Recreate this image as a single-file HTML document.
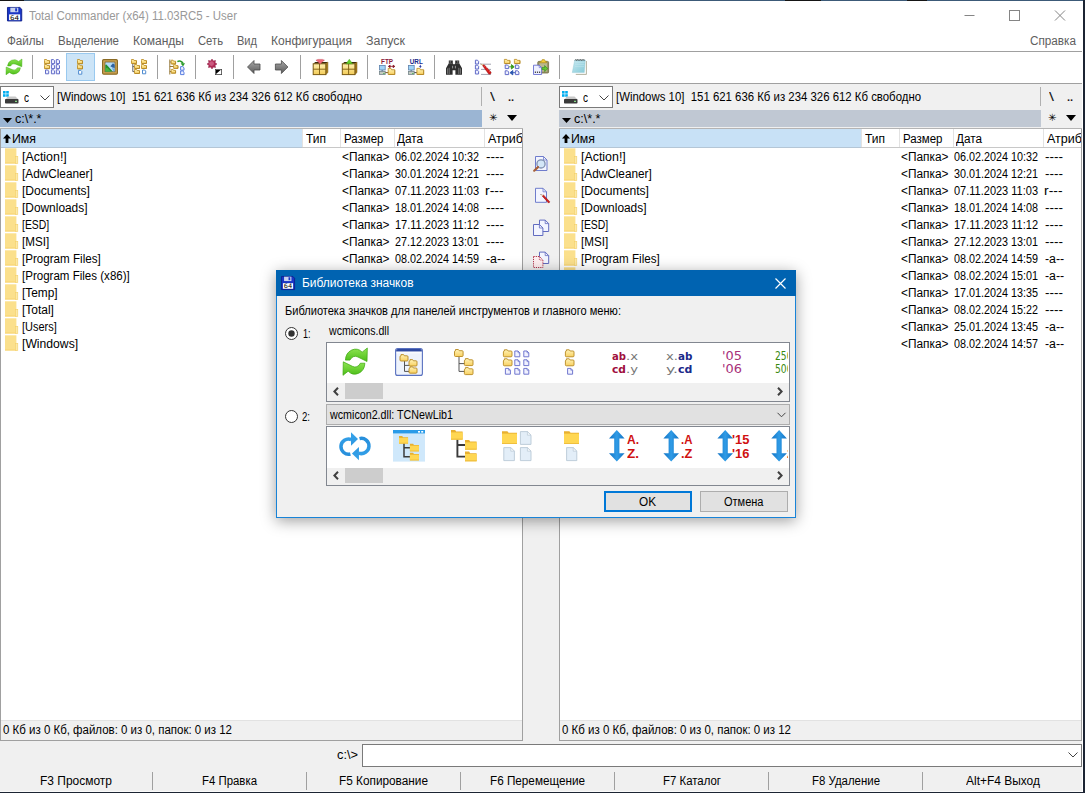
<!DOCTYPE html>
<html lang="ru"><head><meta charset="utf-8"><title>Total Commander</title>
<style>
html,body{margin:0;padding:0;}
body{width:1085px;height:793px;position:relative;overflow:hidden;background:#f0f0f0;font-family:"Liberation Sans", sans-serif;font-size:12px;color:#000;}
.a{position:absolute;}
.t{position:absolute;white-space:pre;transform-origin:0 0;line-height:1;}
svg{position:absolute;overflow:visible;}
</style></head><body>
<svg width="0" height="0" style="position:absolute"><defs><linearGradient id="gGreen" x1="0" y1="0" x2="0" y2="1"><stop offset="0" stop-color="#8ee552"/><stop offset="1" stop-color="#4cbd18"/></linearGradient><linearGradient id="gGreen2" x1="0" y1="1" x2="0" y2="0"><stop offset="0" stop-color="#8ee552"/><stop offset="1" stop-color="#4cbd18"/></linearGradient><linearGradient id="gBlue2" gradientUnits="userSpaceOnUse" x1="0" y1="0" x2="0" y2="28"><stop offset="0" stop-color="#36a3ea"/><stop offset="1" stop-color="#238ad8"/></linearGradient><linearGradient id="gFold" x1="0" y1="0" x2="0" y2="1"><stop offset="0" stop-color="#fff3b8"/><stop offset="1" stop-color="#f8d060"/></linearGradient><linearGradient id="gGray" x1="0" y1="0" x2="0" y2="1"><stop offset="0" stop-color="#a8a8a8"/><stop offset="1" stop-color="#5a5a5a"/></linearGradient><linearGradient id="gBlueArr" x1="0" y1="0" x2="1" y2="0"><stop offset="0" stop-color="#1273c4"/><stop offset="0.5" stop-color="#2f9be6"/><stop offset="1" stop-color="#1273c4"/></linearGradient><linearGradient id="gBox" x1="0" y1="0" x2="0" y2="1"><stop offset="0" stop-color="#fff0b0"/><stop offset="1" stop-color="#f3cc58"/></linearGradient><linearGradient id="gNote" x1="0" y1="0" x2="1" y2="1"><stop offset="0" stop-color="#c4e8f0"/><stop offset="1" stop-color="#86cad8"/></linearGradient><linearGradient id="gSky" x1="0" y1="0" x2="0" y2="1"><stop offset="0" stop-color="#9fd4f5"/><stop offset="1" stop-color="#e9f6ff"/></linearGradient></defs></svg>
<div class="a" style="left:0px;top:0px;width:1085px;height:793px;background:#f0f0f0;"></div>
<div class="a" style="left:0px;top:0px;width:1085px;height:52px;background:#ffffff;"></div>
<div class="a" style="left:0px;top:0px;width:1085px;height:1px;background:#3c5a78;"></div>
<div class="a" style="left:0px;top:0px;width:24px;height:1px;background:#151515;"></div>
<div class="a" style="left:785px;top:0px;width:36px;height:1px;background:#151515;"></div>
<div class="a" style="left:907px;top:0px;width:20px;height:1px;background:#151515;"></div>
<svg style="left:7px;top:7px" width="16" height="16" viewBox="0 0 16 16"><g transform="scale(0.95 0.9)"><g transform="scale(1.0)"><path d="M0.5 0.5H13.5L15.5 2.5V15.5H0.5Z" fill="#1a36c6" stroke="#0e1f8c" stroke-width="1"/><rect x="3.5" y="0.8" width="8.4" height="5" fill="#c9d3ee"/><rect x="8.6" y="1.4" width="2" height="3.4" fill="#1a36c6"/><rect x="2.2" y="8.2" width="11.6" height="6.4" fill="#fff"/><text x="3.2" y="13.9" font-family="DejaVu Sans Mono, Liberation Mono, monospace" font-size="7" fill="#000" textLength="9.6" lengthAdjust="spacingAndGlyphs">64</text></g></g></svg>
<span class="t" style="left:29px;top:9.84px;font-size:12px;color:#999;transform:scaleX(0.9547);">Total Commander (x64) 11.03RC5 - User</span>
<svg style="left:947px;top:1px" width="138" height="29" viewBox="0 0 138 29"><path d="M17.5 14.5h10" stroke="#858585" stroke-width="1" fill="none"/><rect x="62.5" y="9.5" width="10" height="10" stroke="#858585" stroke-width="1" fill="none"/><path d="M108 9.5l10 10M118 9.5l-10 10" stroke="#858585" stroke-width="1" fill="none"/></svg>
<span class="t" style="left:7px;top:34.84px;font-size:12px;color:#606060;transform:scaleX(0.9701);">Файлы</span>
<span class="t" style="left:58px;top:34.84px;font-size:12px;color:#606060;transform:scaleX(0.9592);">Выделение</span>
<span class="t" style="left:133px;top:34.84px;font-size:12px;color:#606060;transform:scaleX(1.0031);">Команды</span>
<span class="t" style="left:198px;top:34.84px;font-size:12px;color:#606060;transform:scaleX(0.9362);">Сеть</span>
<span class="t" style="left:237px;top:34.84px;font-size:12px;color:#606060;transform:scaleX(0.9209);">Вид</span>
<span class="t" style="left:271px;top:34.84px;font-size:12px;color:#606060;transform:scaleX(1.0058);">Конфигурация</span>
<span class="t" style="left:366px;top:34.84px;font-size:12px;color:#606060;transform:scaleX(1.0387);">Запуск</span>
<span class="t" style="left:1030px;top:34.84px;font-size:12px;color:#606060;transform:scaleX(0.9771);">Справка</span>
<div class="a" style="left:0px;top:52px;width:1085px;height:32px;background:#ffffff;"></div>
<div class="a" style="left:0px;top:51px;width:1085px;height:1px;background:#a0a0a0;"></div>
<div class="a" style="left:0px;top:83px;width:1085px;height:1px;background:#a0a0a0;"></div>
<div class="a" style="left:66px;top:53px;width:29px;height:28px;background:#cce4f7;border:1px solid #99c9ef;box-sizing:border-box;"></div>
<div class="a" style="left:32px;top:55px;width:1px;height:24px;background:#a0a0a0;"></div>
<div class="a" style="left:157px;top:55px;width:1px;height:24px;background:#a0a0a0;"></div>
<div class="a" style="left:195px;top:55px;width:1px;height:24px;background:#a0a0a0;"></div>
<div class="a" style="left:233px;top:55px;width:1px;height:24px;background:#a0a0a0;"></div>
<div class="a" style="left:300px;top:55px;width:1px;height:24px;background:#a0a0a0;"></div>
<div class="a" style="left:367px;top:55px;width:1px;height:24px;background:#a0a0a0;"></div>
<div class="a" style="left:434px;top:55px;width:1px;height:24px;background:#a0a0a0;"></div>
<div class="a" style="left:559px;top:55px;width:1px;height:24px;background:#a0a0a0;"></div>
<svg style="left:0;top:0" width="1085" height="90" viewBox="0 0 1085 90"><g transform="translate(6 59)"><path d="M1.6 7A6.6 6.6 0 0 1 12.6 2.4L16 0L15.8 7.8L9.8 5.2A3.9 3.9 0 0 0 4.6 7Z" fill="url(#gGreen)" stroke="#3fa812" stroke-width="0.45" stroke-linejoin="round"/><g transform="rotate(180 8 7.9)"><path d="M1.6 7A6.6 6.6 0 0 1 12.6 2.4L16 0L15.8 7.8L9.8 5.2A3.9 3.9 0 0 0 4.6 7Z" fill="url(#gGreen2)" stroke="#3fa812" stroke-width="0.45" stroke-linejoin="round"/></g></g><g transform="translate(44 59)"><path d="M0.5 1.5V4.7H5.5V1.5H3.1L2.6 0.5H0.5Z" fill="url(#gFold)" stroke="#c0922a" stroke-width="0.9" stroke-linejoin="miter"/><path d="M5.4 2.0V4.6000000000000005H1.1" fill="none" stroke="#a87a18" stroke-width="0.5"/><path d="M0.5 6.5V9.7H5.5V6.5H3.1L2.6 5.5H0.5Z" fill="url(#gFold)" stroke="#c0922a" stroke-width="0.9" stroke-linejoin="miter"/><path d="M5.4 7.0V9.6H1.1" fill="none" stroke="#a87a18" stroke-width="0.5"/><path d="M1.5 11H3.58L4.7 12.12V14.8H1.5Z" fill="#eef0ff" stroke="#626cc8" stroke-width="1.0" stroke-linejoin="miter"/><path d="M7.4 0.6H9.480000000000002L10.600000000000001 1.7199999999999998V4.6H7.4Z" fill="#eef0ff" stroke="#626cc8" stroke-width="1.0" stroke-linejoin="miter"/><path d="M7.4 5.6H9.480000000000002L10.600000000000001 6.72V9.6H7.4Z" fill="#eef0ff" stroke="#626cc8" stroke-width="1.0" stroke-linejoin="miter"/><path d="M7.4 10.8H9.480000000000002L10.600000000000001 11.92V14.8H7.4Z" fill="#eef0ff" stroke="#626cc8" stroke-width="1.0" stroke-linejoin="miter"/><path d="M12.3 0.6H14.38L15.5 1.7199999999999998V4.6H12.3Z" fill="#eef0ff" stroke="#626cc8" stroke-width="1.0" stroke-linejoin="miter"/><path d="M12.3 5.6H14.38L15.5 6.72V9.6H12.3Z" fill="#eef0ff" stroke="#626cc8" stroke-width="1.0" stroke-linejoin="miter"/><path d="M12.3 10.8H14.38L15.5 11.92V14.8H12.3Z" fill="#eef0ff" stroke="#626cc8" stroke-width="1.0" stroke-linejoin="miter"/></g><g transform="translate(77 59)"><path d="M0.5 1.5V4.7H5.5V1.5H3.1L2.6 0.5H0.5Z" fill="url(#gFold)" stroke="#c0922a" stroke-width="0.9" stroke-linejoin="miter"/><path d="M5.4 2.0V4.6000000000000005H1.1" fill="none" stroke="#a87a18" stroke-width="0.5"/><path d="M0.5 6.7V9.9H5.5V6.7H3.1L2.6 5.7H0.5Z" fill="url(#gFold)" stroke="#c0922a" stroke-width="0.9" stroke-linejoin="miter"/><path d="M5.4 7.2V9.8H1.1" fill="none" stroke="#a87a18" stroke-width="0.5"/><path d="M1.6 11.4H3.6800000000000006L4.800000000000001 12.52V15.2H1.6Z" fill="#fff" stroke="#4e8bd0" stroke-width="1.0" stroke-linejoin="miter"/></g><g transform="translate(102 59)"><rect x="0.6" y="0.6" width="14.8" height="14.6" rx="1.2" fill="#d1a855" stroke="#8a6a24" stroke-width="1.2"/><rect x="3" y="3" width="10" height="9.8" fill="#b4dbf6" stroke="#6a5220" stroke-width="0.7"/><path d="M8.4 7.2L11 4.2L12.7 5.8V9L10.4 8.6Z" fill="#2f62a0"/><path d="M3.3 12.5V6L4.4 5.6L10.8 12.5Z" fill="#23902a"/><path d="M3.3 12.5V9.8L5 8.4L9 12.5Z" fill="#48b440"/><path d="M10 9L12.7 9.8V12.5H11.6Z" fill="#6aa8dc"/></g><g transform="translate(131 59)"><path d="M1.8 5V12.6H3.6M1.8 7.6H3.4" stroke="#555" stroke-width="0.9" fill="none"/><path d="M0.5 1.5V4.5H5.5V1.5H3.1L2.6 0.5H0.5Z" fill="url(#gFold)" stroke="#c0922a" stroke-width="0.9" stroke-linejoin="miter"/><path d="M5.4 2.0V4.4H1.1" fill="none" stroke="#a87a18" stroke-width="0.5"/><path d="M3.5 6.5V9.5H8.5V6.5H6.1L5.6 5.5H3.5Z" fill="url(#gFold)" stroke="#c0922a" stroke-width="0.9" stroke-linejoin="miter"/><path d="M8.4 7.0V9.4H4.1" fill="none" stroke="#a87a18" stroke-width="0.5"/><path d="M3.5 11.5V14.5H8.5V11.5H6.1L5.6 10.5H3.5Z" fill="url(#gFold)" stroke="#c0922a" stroke-width="0.9" stroke-linejoin="miter"/><path d="M8.4 12.0V14.4H4.1" fill="none" stroke="#a87a18" stroke-width="0.5"/><path d="M10.5 1.5V4.5H15.5V1.5H13.1L12.6 0.5H10.5Z" fill="url(#gFold)" stroke="#c0922a" stroke-width="0.9" stroke-linejoin="miter"/><path d="M15.4 2.0V4.4H11.1" fill="none" stroke="#a87a18" stroke-width="0.5"/><path d="M10.5 6.5V9.5H15.5V6.5H13.1L12.6 5.5H10.5Z" fill="url(#gFold)" stroke="#c0922a" stroke-width="0.9" stroke-linejoin="miter"/><path d="M15.4 7.0V9.4H11.1" fill="none" stroke="#a87a18" stroke-width="0.5"/><path d="M11.5 11H13.58L14.7 12.12V14.8H11.5Z" fill="#fff" stroke="#4e8bd0" stroke-width="1.0" stroke-linejoin="miter"/></g><g transform="translate(169 59)"><path d="M0.8 0.5V15.5M0.8 3H3M0.8 7.5H5M0.8 12.5H3" stroke="#8a6a24" stroke-width="0.9" fill="none"/><path d="M2.2 2.2V5.0H6.6000000000000005V2.2H4.488L4.048 1.2H2.2Z" fill="url(#gFold)" stroke="#c0922a" stroke-width="0.9" stroke-linejoin="miter"/><path d="M6.500000000000001 2.7V4.9H2.8000000000000003" fill="none" stroke="#a87a18" stroke-width="0.5"/><path d="M4.6 6.6V9.399999999999999H9.0V6.6H6.888L6.4479999999999995 5.6H4.6Z" fill="url(#gFold)" stroke="#c0922a" stroke-width="0.9" stroke-linejoin="miter"/><path d="M8.9 7.1V9.299999999999999H5.199999999999999" fill="none" stroke="#a87a18" stroke-width="0.5"/><path d="M2.2 11.4V14.2H6.6000000000000005V11.4H4.488L4.048 10.4H2.2Z" fill="url(#gFold)" stroke="#c0922a" stroke-width="0.9" stroke-linejoin="miter"/><path d="M6.500000000000001 11.9V14.1H2.8000000000000003" fill="none" stroke="#a87a18" stroke-width="0.5"/><path d="M8.4 2.6A4 4 0 0 1 14 4.4" stroke="#2a9a2a" stroke-width="1.6" fill="none"/><path d="M11.6 4.2H16L14 7.4Z" fill="#2a9a2a"/><path d="M11.6 7.6H13.81L15.0 8.79V11.2H11.6Z" fill="#eef0ff" stroke="#5a7fe0" stroke-width="1.0" stroke-linejoin="miter"/><path d="M11.6 12H13.81L15.0 13.19V15.6H11.6Z" fill="#eef0ff" stroke="#5a7fe0" stroke-width="1.0" stroke-linejoin="miter"/></g><g transform="translate(207 59)"><polygon points="10.00,5.00 8.05,6.26 8.54,8.54 6.26,8.05 5.00,10.00 3.74,8.05 1.46,8.54 1.95,6.26 0.00,5.00 1.95,3.74 1.46,1.46 3.74,1.95 5.00,0.00 6.26,1.95 8.54,1.46 8.05,3.74" fill="#b02a55" stroke="#8c1d42" stroke-width="0.5"/><circle cx="4.6" cy="4.6" r="2.4" fill="#cc5a80"/><rect x="8.4" y="10.4" width="6.2" height="5.2" fill="#fff" stroke="#444" stroke-width="0.8"/><path d="M9 11H13.6L9 15Z" fill="#000"/></g><g transform="translate(247 60)"><path d="M0.5 7L7 0.5V4H13V10H7V13.5Z" fill="url(#gGray)" stroke="#4a4a4a" stroke-width="0.8" stroke-linejoin="round"/></g><g transform="translate(274.4 60)"><path d="M13.5 7L7 0.5V4H1V10H7V13.5Z" fill="url(#gGray)" stroke="#4a4a4a" stroke-width="0.8" stroke-linejoin="round"/></g><g transform="translate(312.5 59)"><path d="M0.7 4.8L2.8 3H15.4L13.3 4.8Z" fill="#3a2c0a"/><path d="M13.3 4.8L15.4 3V13.6L13.3 15.6Z" fill="#a87e1e" stroke="#7a5a12" stroke-width="0.5" stroke-linejoin="round"/><rect x="0.7" y="4.8" width="12.6" height="10.8" fill="url(#gBox)" stroke="#7a5a12" stroke-width="1"/><path d="M7 4.8V15.6M0.7 10.2H13.3" stroke="#7a5a12" stroke-width="0.9" fill="none"/><path d="M3.4 1.2L5.4 0.4H10L12 1.2L10.6 2.2L7.7 5L4.8 2.2Z" fill="#ee6a7a" stroke="#c03a4c" stroke-width="0.4" stroke-linejoin="round"/></g><g transform="translate(341.6 59)"><path d="M0.7 4.8L2.8 3H15.4L13.3 4.8Z" fill="#3a2c0a"/><path d="M13.3 4.8L15.4 3V13.6L13.3 15.6Z" fill="#a87e1e" stroke="#7a5a12" stroke-width="0.5" stroke-linejoin="round"/><rect x="0.7" y="4.8" width="12.6" height="10.8" fill="url(#gBox)" stroke="#7a5a12" stroke-width="1"/><path d="M7 4.8V15.6M0.7 10.2H13.3" stroke="#7a5a12" stroke-width="0.9" fill="none"/><path d="M4.4 4.8L7.7 0.2L11 4.8Z" fill="#62d02a" stroke="#3a9a12" stroke-width="0.4"/></g><g transform="translate(379 59)"><text x="2" y="4.8" font-family="Liberation Sans, sans-serif" font-size="6.4" font-weight="bold" fill="#8a1a3a" textLength="12" lengthAdjust="spacingAndGlyphs">FTP</text><rect x="0.4" y="6.4" width="5.8" height="4.6" fill="#9fd4f7" stroke="#5f83ad" stroke-width="0.8"/><rect x="2.4" y="11" width="1.8" height="1.4" fill="#6f8aa8"/><rect x="0.4" y="12.4" width="5.8" height="3" fill="#c3cbc0" stroke="#75858a" stroke-width="0.8"/><rect x="4.2" y="14" width="1.4" height="0.9" fill="#3fae4a"/><path d="M6.4 13.6H9.4" stroke="#6a4a1a" stroke-width="0.9"/><path d="M9.6 7.4H15.6M9.4 7.4l1.7-1.3v2.6zM15.8 7.4l-1.7-1.3v2.6z" stroke="#8a1a2a" stroke-width="0.8" fill="#8a1a2a"/><path d="M9.2 10.742V15.5H15.799999999999999V10.742H12.632L11.972 9.4H9.2Z" fill="url(#gFold)" stroke="#c0922a" stroke-width="0.9" stroke-linejoin="miter"/><path d="M15.7 11.242V15.4H9.799999999999999" fill="none" stroke="#a87a18" stroke-width="0.5"/></g><g transform="translate(408 59)"><text x="1.8" y="4.8" font-family="Liberation Sans, sans-serif" font-size="6.4" font-weight="bold" fill="#1a2a8a" textLength="13" lengthAdjust="spacingAndGlyphs">URL</text><rect x="0.4" y="6.4" width="5.8" height="4.6" fill="#9fd4f7" stroke="#5f83ad" stroke-width="0.8"/><rect x="2.4" y="11" width="1.8" height="1.4" fill="#6f8aa8"/><rect x="0.4" y="12.4" width="5.8" height="3" fill="#c3cbc0" stroke="#75858a" stroke-width="0.8"/><rect x="4.2" y="14" width="1.4" height="0.9" fill="#3fae4a"/><path d="M6.4 13.6H9" stroke="#333" stroke-width="0.9"/><path d="M12.3 5.6L13.1 7.4L12.3 9.2L11.5 7.4ZM10.6 7.4L12.3 6.8L14 7.4L12.3 8Z" fill="#1a2a9a"/><path d="M8.9 10.742V15.5H15.7V10.742H12.436L11.756 9.4H8.9Z" fill="url(#gFold)" stroke="#c0922a" stroke-width="0.9" stroke-linejoin="miter"/><path d="M15.6 11.242V15.4H9.5" fill="none" stroke="#a87a18" stroke-width="0.5"/></g><g transform="translate(446 59.8)"><path d="M2.8 0.6H6.8V3.4L7.4 4.4H8.6L9.2 3.4V0.6H13.2V3.4L16 8.4V15H9.4V10.4H6.6V15H0V8.4L2.8 3.4Z" fill="#2e2e2e"/><path d="M1.6 8.6V14M3.2 8V14.2M12.8 8V14.2M14.4 8.6V14" stroke="#8a8a8a" stroke-width="0.8"/><path d="M4.2 1.4V2.8M11.8 1.4V2.8M6.6 6V8.6M9.4 6V8.6" stroke="#b0b0b0" stroke-width="0.8"/><path d="M3 3.8H6.6M9.4 3.8H13" stroke="#666" stroke-width="0.7"/></g><g transform="translate(475 59)"><path d="M0.4 1.2H2.4800000000000004L3.6 2.32V5.0H0.4Z" fill="#eef0ff" stroke="#626cc8" stroke-width="1.0" stroke-linejoin="miter"/><path d="M0.4 6.2H2.4800000000000004L3.6 7.32V10.0H0.4Z" fill="#eef0ff" stroke="#626cc8" stroke-width="1.0" stroke-linejoin="miter"/><path d="M0.4 11.2H2.4800000000000004L3.6 12.319999999999999V15.0H0.4Z" fill="#eef0ff" stroke="#626cc8" stroke-width="1.0" stroke-linejoin="miter"/><path d="M6 5.2H16M6 10.4H16M6 15.4H16" stroke="#8a8a9a" stroke-width="0.8"/><path d="M7.4 6.4L9 5.6L16.2 13.2L15.6 15L13.8 15.2Z" fill="#d41a1a" stroke="#8a1010" stroke-width="0.4"/><path d="M9.4 7.4L10.4 6.6M11 9L12 8.2M12.6 10.8L13.6 10M14.2 12.6L15.2 11.8" stroke="#f4b0b0" stroke-width="0.5"/><path d="M5.2 4.8L9 5.6L7.4 6.6Z" fill="#e8c48a"/><path d="M5 4.6L6.6 5L5.9 5.6Z" fill="#222"/></g><g transform="translate(504 59)"><path d="M0.4 1.4V4.6000000000000005H6.0V1.4H3.312L2.752 0.4H0.4Z" fill="url(#gFold)" stroke="#c0922a" stroke-width="0.9" stroke-linejoin="miter"/><path d="M5.9 1.9V4.500000000000001H1.0" fill="none" stroke="#a87a18" stroke-width="0.5"/><path d="M10.4 1.4V4.6000000000000005H16.0V1.4H13.312000000000001L12.752 0.4H10.4Z" fill="url(#gFold)" stroke="#c0922a" stroke-width="0.9" stroke-linejoin="miter"/><path d="M15.9 1.9V4.500000000000001H11.0" fill="none" stroke="#a87a18" stroke-width="0.5"/><path d="M1.2 6H3.4750000000000005L4.7 7.225V9.6H1.2Z" fill="#eef0ff" stroke="#626cc8" stroke-width="1.0" stroke-linejoin="miter"/><path d="M11.4 6H13.675L14.9 7.225V9.6H11.4Z" fill="#eef0ff" stroke="#626cc8" stroke-width="1.0" stroke-linejoin="miter"/><path d="M1.2 11.8H3.4750000000000005L4.7 13.025V15.600000000000001H1.2Z" fill="#eef0ff" stroke="#626cc8" stroke-width="1.0" stroke-linejoin="miter"/><path d="M11.4 11.8H13.675L14.9 13.025V15.600000000000001H11.4Z" fill="#eef0ff" stroke="#626cc8" stroke-width="1.0" stroke-linejoin="miter"/><path d="M5.2 7.8H8M7.4 5.6L10.2 7.8L7.4 10Z" fill="#3a9a1a" stroke="#3a9a1a" stroke-width="0.9" stroke-linejoin="round"/><path d="M11 13.7H8.2M8.8 11.5L6 13.7L8.8 15.9Z" fill="#2a55b0" stroke="#2a55b0" stroke-width="0.9" stroke-linejoin="round"/></g><g transform="translate(533 59)"><rect x="4.8" y="2.4" width="10.8" height="11.6" rx="1" fill="#9a9468" stroke="#6f6a40" stroke-width="0.8"/><rect x="6.4" y="4" width="7.6" height="8.6" fill="#b9b78e"/><path d="M7.2 3.8V2.2H8.6L9.2 0.6H11.4L12 2.2H13.4V3.8Z" fill="#f2cc3a" stroke="#a8861a" stroke-width="0.6"/><path d="M0.5 6.2H6.2L8.6 8.6V15.5H0.5Z" fill="#eef0ff" stroke="#6a6fd0" stroke-width="0.9"/><path d="M6.2 6.2V8.6H8.6" fill="none" stroke="#6a6fd0" stroke-width="0.7"/><rect x="1.8" y="12.6" width="1.2" height="1.2" fill="#222"/><rect x="3.9" y="12.6" width="1.2" height="1.2" fill="#222"/><rect x="6" y="12.6" width="1.2" height="1.2" fill="#222"/><path d="M9 8.6H11.6V6.6L14.8 9.6L11.6 12.6V10.6H9Z" fill="#62c832" stroke="#2f8a1a" stroke-width="0.6" stroke-linejoin="round"/></g><g transform="translate(572 59.2)"><path d="M3.6 1.6H14.4V15.2H3.6Z" fill="#fff"/><path d="M14.4 1.8V15.2H3.8" fill="none" stroke="#a09e86" stroke-width="0.8"/><path d="M2.7 0.8H13.3L12.3 13.4H0.3Z" fill="url(#gNote)" stroke="#8cc4d2" stroke-width="0.4"/><path d="M3.4 3.4H12.6M3.2 5.4H12.4M3 7.4H12.2" stroke="#c8e8f0" stroke-width="0.6" opacity="0.8"/><path d="M3 1.4L3.8 0.2L4.6 1.4L5.4 0.2L6.2 1.4L7 0.2L7.8 1.4L8.6 0.2L9.4 1.4L10.2 0.2L11 1.4L11.8 0.2L12.6 1.4" fill="none" stroke="#3a3a3a" stroke-width="0.7"/></g></svg>
<div class="a" style="left:0px;top:86px;width:54px;height:22px;background:#fff;border:1px solid #7a7a7a;box-sizing:border-box;"></div>
<span class="t" style="left:24px;top:91.84px;font-size:12px;transform:scaleX(0.8333);">c</span>
<svg style="left:40px;top:95px" width="10" height="6" viewBox="0 0 10 6"><path d="M0.5 0.5l4.5 4.5l4.5-4.5" stroke="#444" stroke-width="1" fill="none"/></svg>
<svg style="left:2.8px;top:91px" width="16" height="14" viewBox="0 0 16 14"><rect x="0" y="0" width="2.6" height="2.6" fill="#00adef"/><rect x="3.2" y="0" width="2.6" height="2.6" fill="#00adef"/><rect x="0" y="3.2" width="2.6" height="2.6" fill="#00adef"/><rect x="3.2" y="3.2" width="2.6" height="2.6" fill="#00adef"/><path d="M3 8l1.5-2.5h8L15 8z" fill="#c8c8c8"/><rect x="2" y="8" width="13.5" height="4.5" rx="0.8" fill="#3a3a3a"/><rect x="12" y="9.8" width="2" height="1" fill="#9f9"/></svg>
<span class="t" style="left:57px;top:90.84px;font-size:12px;transform:scaleX(0.9494);">[Windows 10]  151 621 636 Кб из 234 326 612 Кб свободно</span>
<div class="a" style="left:481px;top:87px;width:1px;height:19px;background:#b0b0b0;"></div>
<span class="t" style="left:490.4px;top:91.02px;font-size:12.5px;color:#1a1a1a;transform:scaleX(1.4350);">\</span>
<span class="t" style="left:508px;top:91.69px;font-size:11px;color:#2a1a1a;font-weight:bold;transform:scaleX(1.0122);">..</span>
<div class="a" style="left:0px;top:110.4px;width:482px;height:16.4px;background:#9bb5d3;"></div>
<svg style="left:3px;top:118px" width="9" height="5" viewBox="0 0 9 5"><path d="M0 0h9l-4.5 5z" fill="#000"/></svg>
<span class="t" style="left:14.5px;top:112.84px;font-size:12px;transform:scaleX(1.0456);">c:\*.*</span>
<span class="t" style="left:488.5px;top:113.03px;font-size:10px;font-weight:bold;font-family:'DejaVu Sans', sans-serif;transform:scaleX(1.0130);">✳</span>
<svg style="left:507px;top:115px" width="10" height="6" viewBox="0 0 10 6"><path d="M0 0h10l-5 6z" fill="#000"/></svg>
<div class="a" style="left:0px;top:128px;width:523px;height:613px;background:#fff;border:1px solid #a0a0a0;box-sizing:border-box;"></div>
<div class="a" style="left:0px;top:128px;width:523px;height:1px;background:#b4b4b4;"></div>
<div class="a" style="left:1px;top:129px;width:521px;height:19px;background:#fff;"></div>
<div class="a" style="left:1px;top:129px;width:301px;height:18px;background:#c8e1f6;"></div>
<div class="a" style="left:1px;top:147px;width:521px;height:1px;background:#c8c8c8;"></div>
<div class="a" style="left:1px;top:147px;width:301px;height:1px;background:#b4c6d6;"></div>
<div class="a" style="left:302px;top:129px;width:1px;height:18px;background:#e2e2e2;"></div>
<div class="a" style="left:340px;top:129px;width:1px;height:18px;background:#e2e2e2;"></div>
<div class="a" style="left:394px;top:129px;width:1px;height:18px;background:#e2e2e2;"></div>
<div class="a" style="left:484px;top:129px;width:1px;height:18px;background:#e2e2e2;"></div>
<svg style="left:3px;top:134px" width="8" height="9" viewBox="0 0 8 9"><path d="M4 0l4 4.5h-2.6v4.5h-2.8v-4.5h-2.6z" fill="#000"/></svg>
<span class="t" style="left:12px;top:132.84px;font-size:12px;transform:scaleX(1.0267);">Имя</span>
<span class="t" style="left:306px;top:132.84px;font-size:12px;transform:scaleX(0.9992);">Тип</span>
<span class="t" style="left:344px;top:132.84px;font-size:12px;transform:scaleX(0.9576);">Размер</span>
<span class="t" style="left:397px;top:132.84px;font-size:12px;transform:scaleX(0.9782);">Дата</span>
<div class="a" style="left:486px;top:129px;width:36px;height:18px;overflow:hidden">
<span class="t" style="left:2px;top:3.84px;font-size:12px;transform:scaleX(1.0448);">Атриб</span>
</div>
<svg style="left:5px;top:148px" width="13" height="16" viewBox="0 0 13 16"><rect x="0" y="0.3" width="11.4" height="15.2" fill="#fbe08c"/><rect x="0" y="14.4" width="11.4" height="1.1" fill="#f8d676"/><rect x="10.4" y="8.4" width="2.4" height="7" fill="#fce9a8" stroke="#f3cf68" stroke-width="0.6"/></svg>
<span class="t" style="left:21.6px;top:150.84px;font-size:12px;transform:scaleX(1.0332);">[Action!]</span>
<span class="t" style="left:342px;top:150.84px;font-size:12px;transform:scaleX(0.9896);">&lt;Папка&gt;</span>
<span class="t" style="left:395px;top:150.84px;font-size:12px;transform:scaleX(0.8991);">06.02.2024 10:32</span>
<span class="t" style="left:486px;top:150.84px;font-size:12px;transform:scaleX(1.1261);">----</span>
<svg style="left:5px;top:165px" width="13" height="16" viewBox="0 0 13 16"><rect x="0" y="0.3" width="11.4" height="15.2" fill="#fbe08c"/><rect x="0" y="14.4" width="11.4" height="1.1" fill="#f8d676"/><rect x="10.4" y="8.4" width="2.4" height="7" fill="#fce9a8" stroke="#f3cf68" stroke-width="0.6"/></svg>
<span class="t" style="left:21.6px;top:167.84px;font-size:12px;transform:scaleX(0.9827);">[AdwCleaner]</span>
<span class="t" style="left:342px;top:167.84px;font-size:12px;transform:scaleX(0.9896);">&lt;Папка&gt;</span>
<span class="t" style="left:395px;top:167.84px;font-size:12px;transform:scaleX(0.8991);">30.01.2024 12:21</span>
<span class="t" style="left:486px;top:167.84px;font-size:12px;transform:scaleX(1.1261);">----</span>
<svg style="left:5px;top:182px" width="13" height="16" viewBox="0 0 13 16"><rect x="0" y="0.3" width="11.4" height="15.2" fill="#fbe08c"/><rect x="0" y="14.4" width="11.4" height="1.1" fill="#f8d676"/><rect x="10.4" y="8.4" width="2.4" height="7" fill="#fce9a8" stroke="#f3cf68" stroke-width="0.6"/></svg>
<span class="t" style="left:21.6px;top:184.84px;font-size:12px;transform:scaleX(1.0080);">[Documents]</span>
<span class="t" style="left:342px;top:184.84px;font-size:12px;transform:scaleX(0.9896);">&lt;Папка&gt;</span>
<span class="t" style="left:395px;top:184.84px;font-size:12px;transform:scaleX(0.9166);">07.11.2023 11:03</span>
<span class="t" style="left:485px;top:184.84px;font-size:12px;transform:scaleX(1.1574);">r---</span>
<svg style="left:5px;top:199px" width="13" height="16" viewBox="0 0 13 16"><rect x="0" y="0.3" width="11.4" height="15.2" fill="#fbe08c"/><rect x="0" y="14.4" width="11.4" height="1.1" fill="#f8d676"/><rect x="10.4" y="8.4" width="2.4" height="7" fill="#fce9a8" stroke="#f3cf68" stroke-width="0.6"/></svg>
<span class="t" style="left:21.6px;top:201.84px;font-size:12px;transform:scaleX(0.9917);">[Downloads]</span>
<span class="t" style="left:342px;top:201.84px;font-size:12px;transform:scaleX(0.9896);">&lt;Папка&gt;</span>
<span class="t" style="left:395px;top:201.84px;font-size:12px;transform:scaleX(0.8991);">18.01.2024 14:08</span>
<span class="t" style="left:486px;top:201.84px;font-size:12px;transform:scaleX(1.1261);">----</span>
<svg style="left:5px;top:216px" width="13" height="16" viewBox="0 0 13 16"><rect x="0" y="0.3" width="11.4" height="15.2" fill="#fbe08c"/><rect x="0" y="14.4" width="11.4" height="1.1" fill="#f8d676"/><rect x="10.4" y="8.4" width="2.4" height="7" fill="#fce9a8" stroke="#f3cf68" stroke-width="0.6"/></svg>
<span class="t" style="left:21.6px;top:218.84px;font-size:12px;transform:scaleX(0.8678);">[ESD]</span>
<span class="t" style="left:342px;top:218.84px;font-size:12px;transform:scaleX(0.9896);">&lt;Папка&gt;</span>
<span class="t" style="left:395px;top:218.84px;font-size:12px;transform:scaleX(0.9166);">17.11.2023 11:12</span>
<span class="t" style="left:486px;top:218.84px;font-size:12px;transform:scaleX(1.1261);">----</span>
<svg style="left:5px;top:233px" width="13" height="16" viewBox="0 0 13 16"><rect x="0" y="0.3" width="11.4" height="15.2" fill="#fbe08c"/><rect x="0" y="14.4" width="11.4" height="1.1" fill="#f8d676"/><rect x="10.4" y="8.4" width="2.4" height="7" fill="#fce9a8" stroke="#f3cf68" stroke-width="0.6"/></svg>
<span class="t" style="left:21.6px;top:235.84px;font-size:12px;transform:scaleX(0.9709);">[MSI]</span>
<span class="t" style="left:342px;top:235.84px;font-size:12px;transform:scaleX(0.9896);">&lt;Папка&gt;</span>
<span class="t" style="left:395px;top:235.84px;font-size:12px;transform:scaleX(0.8991);">27.12.2023 13:01</span>
<span class="t" style="left:486px;top:235.84px;font-size:12px;transform:scaleX(1.1261);">----</span>
<svg style="left:5px;top:250px" width="13" height="16" viewBox="0 0 13 16"><rect x="0" y="0.3" width="11.4" height="15.2" fill="#fbe08c"/><rect x="0" y="14.4" width="11.4" height="1.1" fill="#f8d676"/><rect x="10.4" y="8.4" width="2.4" height="7" fill="#fce9a8" stroke="#f3cf68" stroke-width="0.6"/></svg>
<span class="t" style="left:21.6px;top:252.84px;font-size:12px;transform:scaleX(0.9673);">[Program Files]</span>
<span class="t" style="left:342px;top:252.84px;font-size:12px;transform:scaleX(0.9896);">&lt;Папка&gt;</span>
<span class="t" style="left:395px;top:252.84px;font-size:12px;transform:scaleX(0.8991);">08.02.2024 14:59</span>
<span class="t" style="left:486px;top:252.84px;font-size:12px;transform:scaleX(1.0283);">-a--</span>
<svg style="left:5px;top:267px" width="13" height="16" viewBox="0 0 13 16"><rect x="0" y="0.3" width="11.4" height="15.2" fill="#fbe08c"/><rect x="0" y="14.4" width="11.4" height="1.1" fill="#f8d676"/><rect x="10.4" y="8.4" width="2.4" height="7" fill="#fce9a8" stroke="#f3cf68" stroke-width="0.6"/></svg>
<span class="t" style="left:21.6px;top:269.84px;font-size:12px;transform:scaleX(0.9622);">[Program Files (x86)]</span>
<span class="t" style="left:342px;top:269.84px;font-size:12px;transform:scaleX(0.9896);">&lt;Папка&gt;</span>
<span class="t" style="left:395px;top:269.84px;font-size:12px;transform:scaleX(0.8991);">08.02.2024 15:01</span>
<span class="t" style="left:486px;top:269.84px;font-size:12px;transform:scaleX(1.0283);">-a--</span>
<svg style="left:5px;top:284px" width="13" height="16" viewBox="0 0 13 16"><rect x="0" y="0.3" width="11.4" height="15.2" fill="#fbe08c"/><rect x="0" y="14.4" width="11.4" height="1.1" fill="#f8d676"/><rect x="10.4" y="8.4" width="2.4" height="7" fill="#fce9a8" stroke="#f3cf68" stroke-width="0.6"/></svg>
<span class="t" style="left:21.6px;top:286.84px;font-size:12px;transform:scaleX(0.9885);">[Temp]</span>
<span class="t" style="left:342px;top:286.84px;font-size:12px;transform:scaleX(0.9896);">&lt;Папка&gt;</span>
<span class="t" style="left:395px;top:286.84px;font-size:12px;transform:scaleX(0.8991);">17.01.2024 13:35</span>
<span class="t" style="left:486px;top:286.84px;font-size:12px;transform:scaleX(1.1261);">----</span>
<svg style="left:5px;top:301px" width="13" height="16" viewBox="0 0 13 16"><rect x="0" y="0.3" width="11.4" height="15.2" fill="#fbe08c"/><rect x="0" y="14.4" width="11.4" height="1.1" fill="#f8d676"/><rect x="10.4" y="8.4" width="2.4" height="7" fill="#fce9a8" stroke="#f3cf68" stroke-width="0.6"/></svg>
<span class="t" style="left:21.6px;top:303.84px;font-size:12px;transform:scaleX(0.9964);">[Total]</span>
<span class="t" style="left:342px;top:303.84px;font-size:12px;transform:scaleX(0.9896);">&lt;Папка&gt;</span>
<span class="t" style="left:395px;top:303.84px;font-size:12px;transform:scaleX(0.8991);">08.02.2024 15:22</span>
<span class="t" style="left:486px;top:303.84px;font-size:12px;transform:scaleX(1.1261);">----</span>
<svg style="left:5px;top:318px" width="13" height="16" viewBox="0 0 13 16"><rect x="0" y="0.3" width="11.4" height="15.2" fill="#fbe08c"/><rect x="0" y="14.4" width="11.4" height="1.1" fill="#f8d676"/><rect x="10.4" y="8.4" width="2.4" height="7" fill="#fce9a8" stroke="#f3cf68" stroke-width="0.6"/></svg>
<span class="t" style="left:21.6px;top:320.84px;font-size:12px;transform:scaleX(0.9154);">[Users]</span>
<span class="t" style="left:342px;top:320.84px;font-size:12px;transform:scaleX(0.9896);">&lt;Папка&gt;</span>
<span class="t" style="left:395px;top:320.84px;font-size:12px;transform:scaleX(0.8991);">25.01.2024 13:45</span>
<span class="t" style="left:486px;top:320.84px;font-size:12px;transform:scaleX(1.0283);">-a--</span>
<svg style="left:5px;top:335px" width="13" height="16" viewBox="0 0 13 16"><rect x="0" y="0.3" width="11.4" height="15.2" fill="#fbe08c"/><rect x="0" y="14.4" width="11.4" height="1.1" fill="#f8d676"/><rect x="10.4" y="8.4" width="2.4" height="7" fill="#fce9a8" stroke="#f3cf68" stroke-width="0.6"/></svg>
<span class="t" style="left:21.6px;top:337.84px;font-size:12px;transform:scaleX(1.0134);">[Windows]</span>
<span class="t" style="left:342px;top:337.84px;font-size:12px;transform:scaleX(0.9896);">&lt;Папка&gt;</span>
<span class="t" style="left:395px;top:337.84px;font-size:12px;transform:scaleX(0.8991);">08.02.2024 14:57</span>
<span class="t" style="left:486px;top:337.84px;font-size:12px;transform:scaleX(1.0283);">-a--</span>
<div class="a" style="left:1px;top:720px;width:521px;height:20px;background:#f0f0f0;"></div>
<div class="a" style="left:1px;top:720px;width:521px;height:1px;background:#e2e2e2;"></div>
<span class="t" style="left:3px;top:723.84px;font-size:12px;transform:scaleX(0.9564);">0 Кб из 0 Кб, файлов: 0 из 0, папок: 0 из 12</span>
<div class="a" style="left:559px;top:86px;width:54px;height:22px;background:#fff;border:1px solid #7a7a7a;box-sizing:border-box;"></div>
<span class="t" style="left:583px;top:91.84px;font-size:12px;transform:scaleX(0.8333);">c</span>
<svg style="left:599px;top:95px" width="10" height="6" viewBox="0 0 10 6"><path d="M0.5 0.5l4.5 4.5l4.5-4.5" stroke="#444" stroke-width="1" fill="none"/></svg>
<svg style="left:561.8px;top:91px" width="16" height="14" viewBox="0 0 16 14"><rect x="0" y="0" width="2.6" height="2.6" fill="#00adef"/><rect x="3.2" y="0" width="2.6" height="2.6" fill="#00adef"/><rect x="0" y="3.2" width="2.6" height="2.6" fill="#00adef"/><rect x="3.2" y="3.2" width="2.6" height="2.6" fill="#00adef"/><path d="M3 8l1.5-2.5h8L15 8z" fill="#c8c8c8"/><rect x="2" y="8" width="13.5" height="4.5" rx="0.8" fill="#3a3a3a"/><rect x="12" y="9.8" width="2" height="1" fill="#9f9"/></svg>
<span class="t" style="left:616px;top:90.84px;font-size:12px;transform:scaleX(0.9494);">[Windows 10]  151 621 636 Кб из 234 326 612 Кб свободно</span>
<div class="a" style="left:1040px;top:87px;width:1px;height:19px;background:#b0b0b0;"></div>
<span class="t" style="left:1049.4px;top:91.02px;font-size:12.5px;color:#1a1a1a;transform:scaleX(1.4350);">\</span>
<span class="t" style="left:1067px;top:91.69px;font-size:11px;color:#2a1a1a;font-weight:bold;transform:scaleX(1.0122);">..</span>
<div class="a" style="left:559px;top:110.4px;width:482px;height:16.4px;background:#c0c8d3;"></div>
<svg style="left:562px;top:118px" width="9" height="5" viewBox="0 0 9 5"><path d="M0 0h9l-4.5 5z" fill="#000"/></svg>
<span class="t" style="left:573.5px;top:112.84px;font-size:12px;transform:scaleX(1.0456);">c:\*.*</span>
<span class="t" style="left:1047.5px;top:113.03px;font-size:10px;font-weight:bold;font-family:'DejaVu Sans', sans-serif;transform:scaleX(1.0130);">✳</span>
<svg style="left:1066px;top:115px" width="10" height="6" viewBox="0 0 10 6"><path d="M0 0h10l-5 6z" fill="#000"/></svg>
<div class="a" style="left:559px;top:128px;width:523px;height:613px;background:#fff;border:1px solid #a0a0a0;box-sizing:border-box;"></div>
<div class="a" style="left:559px;top:128px;width:523px;height:1px;background:#b4b4b4;"></div>
<div class="a" style="left:560px;top:129px;width:521px;height:19px;background:#fff;"></div>
<div class="a" style="left:560px;top:129px;width:301px;height:18px;background:#c8e1f6;"></div>
<div class="a" style="left:560px;top:147px;width:521px;height:1px;background:#c8c8c8;"></div>
<div class="a" style="left:560px;top:147px;width:301px;height:1px;background:#b4c6d6;"></div>
<div class="a" style="left:861px;top:129px;width:1px;height:18px;background:#e2e2e2;"></div>
<div class="a" style="left:899px;top:129px;width:1px;height:18px;background:#e2e2e2;"></div>
<div class="a" style="left:953px;top:129px;width:1px;height:18px;background:#e2e2e2;"></div>
<div class="a" style="left:1043px;top:129px;width:1px;height:18px;background:#e2e2e2;"></div>
<svg style="left:562px;top:134px" width="8" height="9" viewBox="0 0 8 9"><path d="M4 0l4 4.5h-2.6v4.5h-2.8v-4.5h-2.6z" fill="#000"/></svg>
<span class="t" style="left:571px;top:132.84px;font-size:12px;transform:scaleX(1.0267);">Имя</span>
<span class="t" style="left:865px;top:132.84px;font-size:12px;transform:scaleX(0.9992);">Тип</span>
<span class="t" style="left:903px;top:132.84px;font-size:12px;transform:scaleX(0.9576);">Размер</span>
<span class="t" style="left:956px;top:132.84px;font-size:12px;transform:scaleX(0.9782);">Дата</span>
<div class="a" style="left:1045px;top:129px;width:36px;height:18px;overflow:hidden">
<span class="t" style="left:2px;top:3.84px;font-size:12px;transform:scaleX(1.0448);">Атриб</span>
</div>
<svg style="left:564px;top:148px" width="13" height="16" viewBox="0 0 13 16"><rect x="0" y="0.3" width="11.4" height="15.2" fill="#fbe08c"/><rect x="0" y="14.4" width="11.4" height="1.1" fill="#f8d676"/><rect x="10.4" y="8.4" width="2.4" height="7" fill="#fce9a8" stroke="#f3cf68" stroke-width="0.6"/></svg>
<span class="t" style="left:580.6px;top:150.84px;font-size:12px;transform:scaleX(1.0332);">[Action!]</span>
<span class="t" style="left:901px;top:150.84px;font-size:12px;transform:scaleX(0.9896);">&lt;Папка&gt;</span>
<span class="t" style="left:954px;top:150.84px;font-size:12px;transform:scaleX(0.8991);">06.02.2024 10:32</span>
<span class="t" style="left:1045px;top:150.84px;font-size:12px;transform:scaleX(1.1261);">----</span>
<svg style="left:564px;top:165px" width="13" height="16" viewBox="0 0 13 16"><rect x="0" y="0.3" width="11.4" height="15.2" fill="#fbe08c"/><rect x="0" y="14.4" width="11.4" height="1.1" fill="#f8d676"/><rect x="10.4" y="8.4" width="2.4" height="7" fill="#fce9a8" stroke="#f3cf68" stroke-width="0.6"/></svg>
<span class="t" style="left:580.6px;top:167.84px;font-size:12px;transform:scaleX(0.9827);">[AdwCleaner]</span>
<span class="t" style="left:901px;top:167.84px;font-size:12px;transform:scaleX(0.9896);">&lt;Папка&gt;</span>
<span class="t" style="left:954px;top:167.84px;font-size:12px;transform:scaleX(0.8991);">30.01.2024 12:21</span>
<span class="t" style="left:1045px;top:167.84px;font-size:12px;transform:scaleX(1.1261);">----</span>
<svg style="left:564px;top:182px" width="13" height="16" viewBox="0 0 13 16"><rect x="0" y="0.3" width="11.4" height="15.2" fill="#fbe08c"/><rect x="0" y="14.4" width="11.4" height="1.1" fill="#f8d676"/><rect x="10.4" y="8.4" width="2.4" height="7" fill="#fce9a8" stroke="#f3cf68" stroke-width="0.6"/></svg>
<span class="t" style="left:580.6px;top:184.84px;font-size:12px;transform:scaleX(1.0080);">[Documents]</span>
<span class="t" style="left:901px;top:184.84px;font-size:12px;transform:scaleX(0.9896);">&lt;Папка&gt;</span>
<span class="t" style="left:954px;top:184.84px;font-size:12px;transform:scaleX(0.9166);">07.11.2023 11:03</span>
<span class="t" style="left:1044px;top:184.84px;font-size:12px;transform:scaleX(1.1574);">r---</span>
<svg style="left:564px;top:199px" width="13" height="16" viewBox="0 0 13 16"><rect x="0" y="0.3" width="11.4" height="15.2" fill="#fbe08c"/><rect x="0" y="14.4" width="11.4" height="1.1" fill="#f8d676"/><rect x="10.4" y="8.4" width="2.4" height="7" fill="#fce9a8" stroke="#f3cf68" stroke-width="0.6"/></svg>
<span class="t" style="left:580.6px;top:201.84px;font-size:12px;transform:scaleX(0.9917);">[Downloads]</span>
<span class="t" style="left:901px;top:201.84px;font-size:12px;transform:scaleX(0.9896);">&lt;Папка&gt;</span>
<span class="t" style="left:954px;top:201.84px;font-size:12px;transform:scaleX(0.8991);">18.01.2024 14:08</span>
<span class="t" style="left:1045px;top:201.84px;font-size:12px;transform:scaleX(1.1261);">----</span>
<svg style="left:564px;top:216px" width="13" height="16" viewBox="0 0 13 16"><rect x="0" y="0.3" width="11.4" height="15.2" fill="#fbe08c"/><rect x="0" y="14.4" width="11.4" height="1.1" fill="#f8d676"/><rect x="10.4" y="8.4" width="2.4" height="7" fill="#fce9a8" stroke="#f3cf68" stroke-width="0.6"/></svg>
<span class="t" style="left:580.6px;top:218.84px;font-size:12px;transform:scaleX(0.8678);">[ESD]</span>
<span class="t" style="left:901px;top:218.84px;font-size:12px;transform:scaleX(0.9896);">&lt;Папка&gt;</span>
<span class="t" style="left:954px;top:218.84px;font-size:12px;transform:scaleX(0.9166);">17.11.2023 11:12</span>
<span class="t" style="left:1045px;top:218.84px;font-size:12px;transform:scaleX(1.1261);">----</span>
<svg style="left:564px;top:233px" width="13" height="16" viewBox="0 0 13 16"><rect x="0" y="0.3" width="11.4" height="15.2" fill="#fbe08c"/><rect x="0" y="14.4" width="11.4" height="1.1" fill="#f8d676"/><rect x="10.4" y="8.4" width="2.4" height="7" fill="#fce9a8" stroke="#f3cf68" stroke-width="0.6"/></svg>
<span class="t" style="left:580.6px;top:235.84px;font-size:12px;transform:scaleX(0.9709);">[MSI]</span>
<span class="t" style="left:901px;top:235.84px;font-size:12px;transform:scaleX(0.9896);">&lt;Папка&gt;</span>
<span class="t" style="left:954px;top:235.84px;font-size:12px;transform:scaleX(0.8991);">27.12.2023 13:01</span>
<span class="t" style="left:1045px;top:235.84px;font-size:12px;transform:scaleX(1.1261);">----</span>
<svg style="left:564px;top:250px" width="13" height="16" viewBox="0 0 13 16"><rect x="0" y="0.3" width="11.4" height="15.2" fill="#fbe08c"/><rect x="0" y="14.4" width="11.4" height="1.1" fill="#f8d676"/><rect x="10.4" y="8.4" width="2.4" height="7" fill="#fce9a8" stroke="#f3cf68" stroke-width="0.6"/></svg>
<span class="t" style="left:580.6px;top:252.84px;font-size:12px;transform:scaleX(0.9673);">[Program Files]</span>
<span class="t" style="left:901px;top:252.84px;font-size:12px;transform:scaleX(0.9896);">&lt;Папка&gt;</span>
<span class="t" style="left:954px;top:252.84px;font-size:12px;transform:scaleX(0.8991);">08.02.2024 14:59</span>
<span class="t" style="left:1045px;top:252.84px;font-size:12px;transform:scaleX(1.0283);">-a--</span>
<svg style="left:564px;top:267px" width="13" height="16" viewBox="0 0 13 16"><rect x="0" y="0.3" width="11.4" height="15.2" fill="#fbe08c"/><rect x="0" y="14.4" width="11.4" height="1.1" fill="#f8d676"/><rect x="10.4" y="8.4" width="2.4" height="7" fill="#fce9a8" stroke="#f3cf68" stroke-width="0.6"/></svg>
<span class="t" style="left:580.6px;top:269.84px;font-size:12px;transform:scaleX(0.9622);">[Program Files (x86)]</span>
<span class="t" style="left:901px;top:269.84px;font-size:12px;transform:scaleX(0.9896);">&lt;Папка&gt;</span>
<span class="t" style="left:954px;top:269.84px;font-size:12px;transform:scaleX(0.8991);">08.02.2024 15:01</span>
<span class="t" style="left:1045px;top:269.84px;font-size:12px;transform:scaleX(1.0283);">-a--</span>
<svg style="left:564px;top:284px" width="13" height="16" viewBox="0 0 13 16"><rect x="0" y="0.3" width="11.4" height="15.2" fill="#fbe08c"/><rect x="0" y="14.4" width="11.4" height="1.1" fill="#f8d676"/><rect x="10.4" y="8.4" width="2.4" height="7" fill="#fce9a8" stroke="#f3cf68" stroke-width="0.6"/></svg>
<span class="t" style="left:580.6px;top:286.84px;font-size:12px;transform:scaleX(0.9885);">[Temp]</span>
<span class="t" style="left:901px;top:286.84px;font-size:12px;transform:scaleX(0.9896);">&lt;Папка&gt;</span>
<span class="t" style="left:954px;top:286.84px;font-size:12px;transform:scaleX(0.8991);">17.01.2024 13:35</span>
<span class="t" style="left:1045px;top:286.84px;font-size:12px;transform:scaleX(1.1261);">----</span>
<svg style="left:564px;top:301px" width="13" height="16" viewBox="0 0 13 16"><rect x="0" y="0.3" width="11.4" height="15.2" fill="#fbe08c"/><rect x="0" y="14.4" width="11.4" height="1.1" fill="#f8d676"/><rect x="10.4" y="8.4" width="2.4" height="7" fill="#fce9a8" stroke="#f3cf68" stroke-width="0.6"/></svg>
<span class="t" style="left:580.6px;top:303.84px;font-size:12px;transform:scaleX(0.9964);">[Total]</span>
<span class="t" style="left:901px;top:303.84px;font-size:12px;transform:scaleX(0.9896);">&lt;Папка&gt;</span>
<span class="t" style="left:954px;top:303.84px;font-size:12px;transform:scaleX(0.8991);">08.02.2024 15:22</span>
<span class="t" style="left:1045px;top:303.84px;font-size:12px;transform:scaleX(1.1261);">----</span>
<svg style="left:564px;top:318px" width="13" height="16" viewBox="0 0 13 16"><rect x="0" y="0.3" width="11.4" height="15.2" fill="#fbe08c"/><rect x="0" y="14.4" width="11.4" height="1.1" fill="#f8d676"/><rect x="10.4" y="8.4" width="2.4" height="7" fill="#fce9a8" stroke="#f3cf68" stroke-width="0.6"/></svg>
<span class="t" style="left:580.6px;top:320.84px;font-size:12px;transform:scaleX(0.9154);">[Users]</span>
<span class="t" style="left:901px;top:320.84px;font-size:12px;transform:scaleX(0.9896);">&lt;Папка&gt;</span>
<span class="t" style="left:954px;top:320.84px;font-size:12px;transform:scaleX(0.8991);">25.01.2024 13:45</span>
<span class="t" style="left:1045px;top:320.84px;font-size:12px;transform:scaleX(1.0283);">-a--</span>
<svg style="left:564px;top:335px" width="13" height="16" viewBox="0 0 13 16"><rect x="0" y="0.3" width="11.4" height="15.2" fill="#fbe08c"/><rect x="0" y="14.4" width="11.4" height="1.1" fill="#f8d676"/><rect x="10.4" y="8.4" width="2.4" height="7" fill="#fce9a8" stroke="#f3cf68" stroke-width="0.6"/></svg>
<span class="t" style="left:580.6px;top:337.84px;font-size:12px;transform:scaleX(1.0134);">[Windows]</span>
<span class="t" style="left:901px;top:337.84px;font-size:12px;transform:scaleX(0.9896);">&lt;Папка&gt;</span>
<span class="t" style="left:954px;top:337.84px;font-size:12px;transform:scaleX(0.8991);">08.02.2024 14:57</span>
<span class="t" style="left:1045px;top:337.84px;font-size:12px;transform:scaleX(1.0283);">-a--</span>
<div class="a" style="left:560px;top:720px;width:521px;height:20px;background:#f0f0f0;"></div>
<div class="a" style="left:560px;top:720px;width:521px;height:1px;background:#e2e2e2;"></div>
<span class="t" style="left:562px;top:723.84px;font-size:12px;transform:scaleX(0.9564);">0 Кб из 0 Кб, файлов: 0 из 0, папок: 0 из 12</span>
<svg style="left:0;top:0" width="1085" height="300" viewBox="0 0 1085 300"><g transform="translate(533 155.5)"><path d="M2.5 1H10.5L14.0 4.5V15H2.5Z" fill="#f3f5ff" stroke="#6f7ccc" stroke-width="1" stroke-linejoin="miter"/><path d="M10.5 1V4.5H14.0" fill="none" stroke="#6f7ccc" stroke-width="0.8"/><circle cx="8" cy="8.4" r="4.1" fill="#cfe4f6" fill-opacity="0.9" stroke="#7f8fb0" stroke-width="1.3"/><path d="M5 11.6L1.2 15.2" stroke="#a8603a" stroke-width="2.2" stroke-linecap="round"/></g><g transform="translate(533 187.5)"><path d="M2.5 0.8H10.0L13.5 4.3V14.8H2.5Z" fill="#f3f5ff" stroke="#6f7ccc" stroke-width="1" stroke-linejoin="miter"/><path d="M10.0 0.8V4.3H13.5" fill="none" stroke="#6f7ccc" stroke-width="0.8"/><path d="M9.2 8.4L15.6 15.6L16.8 14.4L10.4 7.4Z" fill="#d41a1a" stroke="#9a1010" stroke-width="0.6"/><path d="M7.4 6.8L10.4 7.4L9.2 8.6Z" fill="#e8c48a"/><path d="M7.2 6.6L8.6 6.9L8 7.5Z" fill="#222"/></g><g transform="translate(533 219.5)"><path d="M6.5 0.6H12.2L15.7 4.1V12.0H6.5Z" fill="#f3f5ff" stroke="#626cc0" stroke-width="1" stroke-linejoin="miter"/><path d="M12.2 0.6V4.1H15.7" fill="none" stroke="#626cc0" stroke-width="0.8"/><path d="M0.5 5H6.4L9.9 8.5V16H0.5Z" fill="#f3f5ff" stroke="#626cc0" stroke-width="1" stroke-linejoin="miter"/><path d="M6.4 5V8.5H9.9" fill="none" stroke="#626cc0" stroke-width="0.8"/></g><g transform="translate(533 251.5)"><path d="M6.5 0.6H12.2L15.7 4.1V12.0H6.5Z" fill="#f3f5ff" stroke="#626cc0" stroke-width="1" stroke-linejoin="miter"/><path d="M12.2 0.6V4.1H15.7" fill="none" stroke="#626cc0" stroke-width="0.8"/><path d="M0.5 5H6.4L9.9 8.5V16H0.5Z" fill="#ffeef0" stroke="#b03048" stroke-width="1" stroke-linejoin="miter" stroke-dasharray="1.2 1"/><path d="M6.4 5V8.5H9.9" fill="none" stroke="#b03048" stroke-width="0.8" stroke-dasharray="1.2 1"/></g></svg>
<span class="t" style="left:337px;top:748.84px;font-size:12px;transform:scaleX(1.0667);">c:\&gt;</span>
<div class="a" style="left:362px;top:744px;width:720px;height:23px;background:#fff;border:1px solid #7a7a7a;box-sizing:border-box;"></div>
<svg style="left:1068px;top:752px" width="10" height="6" viewBox="0 0 10 6"><path d="M0.5 0.5l4.5 4.5l4.5-4.5" stroke="#444" stroke-width="1" fill="none"/></svg>
<span class="t" style="left:40px;top:774.84px;font-size:12px;transform:scaleX(0.9981);">F3 Просмотр</span>
<span class="t" style="left:202px;top:774.84px;font-size:12px;transform:scaleX(0.9503);">F4 Правка</span>
<span class="t" style="left:339px;top:774.84px;font-size:12px;transform:scaleX(0.9838);">F5 Копирование</span>
<span class="t" style="left:490px;top:774.84px;font-size:12px;transform:scaleX(0.9761);">F6 Перемещение</span>
<span class="t" style="left:663px;top:774.84px;font-size:12px;transform:scaleX(0.9513);">F7 Каталог</span>
<span class="t" style="left:812px;top:774.84px;font-size:12px;transform:scaleX(0.9525);">F8 Удаление</span>
<span class="t" style="left:966px;top:774.84px;font-size:12px;transform:scaleX(0.9964);">Alt+F4 Выход</span>
<div class="a" style="left:152px;top:772px;width:1px;height:18px;background:#a0a0a0;"></div>
<div class="a" style="left:306px;top:772px;width:1px;height:18px;background:#a0a0a0;"></div>
<div class="a" style="left:460px;top:772px;width:1px;height:18px;background:#a0a0a0;"></div>
<div class="a" style="left:614px;top:772px;width:1px;height:18px;background:#a0a0a0;"></div>
<div class="a" style="left:768px;top:772px;width:1px;height:18px;background:#a0a0a0;"></div>
<div class="a" style="left:922px;top:772px;width:1px;height:18px;background:#a0a0a0;"></div>
<div class="a" style="left:0px;top:791px;width:1085px;height:1px;background:#fafafa;"></div>
<div class="a" style="left:0px;top:792px;width:1085px;height:1px;background:#1c2433;"></div>
<div class="a" style="left:1082px;top:1px;width:1px;height:791px;background:#ffffff;"></div>
<div class="a" style="left:1083px;top:0px;width:2px;height:793px;background:#1c2433;"></div>
<div class="a" style="left:276px;top:270px;width:520px;height:248px;background:#f0f0f0;border:1px solid #1883d7;box-sizing:border-box;box-shadow:0 3px 14px rgba(0,0,0,0.38);"></div>
<div class="a" style="left:276px;top:270px;width:520px;height:26px;background:#0063b1;"></div>
<span class="t" style="left:301.5px;top:276.84px;font-size:12px;color:#fff;transform:scaleX(0.9972);">Библиотека значков</span>
<svg style="left:775px;top:278px" width="11" height="11" viewBox="0 0 11 11"><path d="M0.5 0.5l10 10M10.5 0.5l-10 10" stroke="#fff" stroke-width="1.2" fill="none"/></svg>
<span class="t" style="left:285px;top:304.84px;font-size:12px;transform:scaleX(0.9210);">Библиотека значков для панелей инструментов и главного меню:</span>
<svg style="left:284.7px;top:327.4px" width="13" height="13" viewBox="0 0 13 13"><circle cx="6.5" cy="6.5" r="6" fill="#fff" stroke="#333"/><circle cx="6.5" cy="6.5" r="3.2" fill="#333"/></svg>
<span class="t" style="left:302.5px;top:327.84px;font-size:12px;transform:scaleX(0.7488);">1:</span>
<span class="t" style="left:329px;top:324.84px;font-size:12px;transform:scaleX(0.8822);">wcmicons.dll</span>
<svg style="left:285px;top:410px" width="13" height="13" viewBox="0 0 13 13"><circle cx="6.5" cy="6.5" r="6" fill="#fff" stroke="#333"/></svg>
<span class="t" style="left:302px;top:410.84px;font-size:12px;transform:scaleX(0.7988);">2:</span>
<div class="a" style="left:326px;top:342px;width:464px;height:60px;background:#fff;border:1px solid #828790;box-sizing:border-box;"></div>
<div class="a" style="left:327px;top:383px;width:462px;height:18px;background:#f0f0f0;"></div>
<div class="a" style="left:345px;top:383px;width:38px;height:16px;background:#cdcdcd;"></div>
<svg style="left:333px;top:387px" width="6" height="9" viewBox="0 0 6 9"><path d="M5 0.8l-3.6 3.7l3.6 3.7" stroke="#404040" stroke-width="2" fill="none"/></svg>
<svg style="left:776.5px;top:387px" width="6" height="9" viewBox="0 0 6 9"><path d="M1 0.8l3.6 3.7l-3.6 3.7" stroke="#404040" stroke-width="2" fill="none"/></svg>
<div class="a" style="left:326px;top:404px;width:464px;height:21px;background:#e1e1e1;border:1px solid #adadad;box-sizing:border-box;"></div>
<span class="t" style="left:330px;top:408.84px;font-size:12px;transform:scaleX(0.8923);">wcmicon2.dll: TCNewLib1</span>
<svg style="left:777px;top:412px" width="9" height="6" viewBox="0 0 9 6"><path d="M0.5 0.8l4 4l4-4" stroke="#444" stroke-width="1" fill="none"/></svg>
<div class="a" style="left:326px;top:426px;width:464px;height:60px;background:#fff;border:1px solid #828790;box-sizing:border-box;"></div>
<div class="a" style="left:327px;top:468px;width:462px;height:17px;background:#f0f0f0;"></div>
<div class="a" style="left:345px;top:468px;width:38px;height:15px;background:#cdcdcd;"></div>
<svg style="left:333px;top:471px" width="6" height="9" viewBox="0 0 6 9"><path d="M5 0.8l-3.6 3.7l3.6 3.7" stroke="#404040" stroke-width="2" fill="none"/></svg>
<svg style="left:776.5px;top:471px" width="6" height="9" viewBox="0 0 6 9"><path d="M1 0.8l3.6 3.7l-3.6 3.7" stroke="#404040" stroke-width="2" fill="none"/></svg>
<div class="a" style="left:604px;top:491px;width:88px;height:21px;background:#e1e1e1;border:2px solid #0078d7;box-sizing:border-box;"></div>
<span class="t" style="left:639px;top:495.84px;font-size:12px;transform:scaleX(0.9802);">OK</span>
<div class="a" style="left:700px;top:491px;width:88px;height:21px;background:#e1e1e1;border:1px solid #adadad;box-sizing:border-box;"></div>
<span class="t" style="left:724px;top:495.84px;font-size:12px;transform:scaleX(0.9173);">Отмена</span>
<svg style="left:280.5px;top:275.5px" width="14" height="14" viewBox="0 0 14 14"><g transform="scale(0.875)"><path d="M0.5 0.5H13.5L15.5 2.5V15.5H0.5Z" fill="#1a36c6" stroke="#0e1f8c" stroke-width="1"/><rect x="3.5" y="0.8" width="8.4" height="5" fill="#c9d3ee"/><rect x="8.6" y="1.4" width="2" height="3.4" fill="#1a36c6"/><rect x="2.2" y="8.2" width="11.6" height="6.4" fill="#fff"/><text x="3.2" y="13.9" font-family="DejaVu Sans Mono, Liberation Mono, monospace" font-size="7" fill="#000" textLength="9.6" lengthAdjust="spacingAndGlyphs">64</text></g></svg>
<svg style="left:0;top:0" width="1085" height="500" viewBox="0 0 1085 500"><g transform="translate(343 348)"><g transform="scale(1.52 1.73)"><path d="M1.6 7A6.6 6.6 0 0 1 12.6 2.4L16 0L15.8 7.8L9.8 5.2A3.9 3.9 0 0 0 4.6 7Z" fill="url(#gGreen)" stroke="#3fa812" stroke-width="0.45" stroke-linejoin="round"/><g transform="rotate(180 8 7.9)"><path d="M1.6 7A6.6 6.6 0 0 1 12.6 2.4L16 0L15.8 7.8L9.8 5.2A3.9 3.9 0 0 0 4.6 7Z" fill="url(#gGreen2)" stroke="#3fa812" stroke-width="0.45" stroke-linejoin="round"/></g></g></g><g transform="translate(395 348)"><rect x="0.6" y="0.6" width="26.8" height="26.8" rx="2" fill="#eef3fc" stroke="#5a72c0" stroke-width="1.1"/><path d="M1.2 2.6Q1.2 1 2.8 1H25.2Q26.8 1 26.8 2.6V3.6H1.2Z" fill="#2f4aa0"/><rect x="1.6" y="3.8" width="24.8" height="1.6" fill="#fff" opacity="0.7"/><path d="M9.5 13V23.4H15M9.5 17.4H15" stroke="#555" stroke-width="1" fill="none"/><path d="M6 7.8Q5 7.8 5 8.8V12.0Q5 13.0 6 13.0H12Q13 13.0 13 12.0V8.8Q13 7.8 12 7.8H9.4L8.6 6.6H6Z" fill="url(#gFold)" stroke="#b8891f" stroke-width="0.9" stroke-linejoin="round"/><path d="M15 12.799999999999999Q14 12.799999999999999 14 13.8V17.0Q14 18.0 15 18.0H21Q22 18.0 22 17.0V13.8Q22 12.799999999999999 21 12.799999999999999H18.4L17.6 11.6H15Z" fill="url(#gFold)" stroke="#b8891f" stroke-width="0.9" stroke-linejoin="round"/><path d="M15 20.0Q14 20.0 14 21.0V24.200000000000003Q14 25.200000000000003 15 25.200000000000003H21Q22 25.200000000000003 22 24.200000000000003V21.0Q22 20.0 21 20.0H18.4L17.6 18.8H15Z" fill="url(#gFold)" stroke="#b8891f" stroke-width="0.9" stroke-linejoin="round"/></g><g transform="translate(454 349)"><path d="M5 8V22.4H11M5 14.6H11" stroke="#555" stroke-width="1" fill="none"/><path d="M1.5 1.7Q0.5 1.7 0.5 2.7V6.5Q0.5 7.5 1.5 7.5H8.1Q9.1 7.5 9.1 6.5V2.7Q9.1 1.7 8.1 1.7H5.23L4.37 0.5H1.5Z" fill="url(#gFold)" stroke="#b8891f" stroke-width="0.9" stroke-linejoin="round"/><path d="M11.4 10.799999999999999Q10.4 10.799999999999999 10.4 11.8V15.600000000000001Q10.4 16.6 11.4 16.6H18.0Q19.0 16.6 19.0 15.600000000000001V11.8Q19.0 10.799999999999999 18.0 10.799999999999999H15.13L14.27 9.6H11.4Z" fill="url(#gFold)" stroke="#b8891f" stroke-width="0.9" stroke-linejoin="round"/><path d="M11.4 19.8Q10.4 19.8 10.4 20.8V24.6Q10.4 25.6 11.4 25.6H18.0Q19.0 25.6 19.0 24.6V20.8Q19.0 19.8 18.0 19.8H15.13L14.27 18.6H11.4Z" fill="url(#gFold)" stroke="#b8891f" stroke-width="0.9" stroke-linejoin="round"/></g><g transform="translate(503 349.4)"><path d="M1.4 1.6Q0.4 1.6 0.4 2.6V6.4Q0.4 7.4 1.4 7.4H8.0Q9.0 7.4 9.0 6.4V2.6Q9.0 1.6 8.0 1.6H5.130000000000001L4.2700000000000005 0.4H1.4Z" fill="url(#gFold)" stroke="#b8891f" stroke-width="0.9" stroke-linejoin="round"/><path d="M1.4 10.6Q0.4 10.6 0.4 11.600000000000001V15.399999999999999Q0.4 16.4 1.4 16.4H8.0Q9.0 16.4 9.0 15.399999999999999V11.600000000000001Q9.0 10.6 8.0 10.6H5.130000000000001L4.2700000000000005 9.4H1.4Z" fill="url(#gFold)" stroke="#b8891f" stroke-width="0.9" stroke-linejoin="round"/><path d="M2.4 19H5.6000000000000005L7.4 20.8V24.8H2.4Z" fill="#f0f1ff" stroke="#6a72cc" stroke-width="0.95" stroke-linejoin="miter"/><path d="M5.6000000000000005 19V20.8H7.4" fill="none" stroke="#6a72cc" stroke-width="0.7"/><path d="M11.8 1.6H15.0L16.8 3.4000000000000004V7.4H11.8Z" fill="#f0f1ff" stroke="#6a72cc" stroke-width="0.95" stroke-linejoin="miter"/><path d="M15.0 1.6V3.4000000000000004H16.8" fill="none" stroke="#6a72cc" stroke-width="0.7"/><path d="M11.8 10.4H15.0L16.8 12.200000000000001V16.2H11.8Z" fill="#f0f1ff" stroke="#6a72cc" stroke-width="0.95" stroke-linejoin="miter"/><path d="M15.0 10.4V12.200000000000001H16.8" fill="none" stroke="#6a72cc" stroke-width="0.7"/><path d="M11.8 19H15.0L16.8 20.8V24.8H11.8Z" fill="#f0f1ff" stroke="#6a72cc" stroke-width="0.95" stroke-linejoin="miter"/><path d="M15.0 19V20.8H16.8" fill="none" stroke="#6a72cc" stroke-width="0.7"/><path d="M20.8 1.6H24.0L25.8 3.4000000000000004V7.4H20.8Z" fill="#f0f1ff" stroke="#6a72cc" stroke-width="0.95" stroke-linejoin="miter"/><path d="M24.0 1.6V3.4000000000000004H25.8" fill="none" stroke="#6a72cc" stroke-width="0.7"/><path d="M20.8 10.4H24.0L25.8 12.200000000000001V16.2H20.8Z" fill="#f0f1ff" stroke="#6a72cc" stroke-width="0.95" stroke-linejoin="miter"/><path d="M24.0 10.4V12.200000000000001H25.8" fill="none" stroke="#6a72cc" stroke-width="0.7"/><path d="M20.8 19H24.0L25.8 20.8V24.8H20.8Z" fill="#f0f1ff" stroke="#6a72cc" stroke-width="0.95" stroke-linejoin="miter"/><path d="M24.0 19V20.8H25.8" fill="none" stroke="#6a72cc" stroke-width="0.7"/></g><g transform="translate(565 349.4)"><path d="M1.4 1.6Q0.4 1.6 0.4 2.6V6.4Q0.4 7.4 1.4 7.4H8.0Q9.0 7.4 9.0 6.4V2.6Q9.0 1.6 8.0 1.6H5.130000000000001L4.2700000000000005 0.4H1.4Z" fill="url(#gFold)" stroke="#b8891f" stroke-width="0.9" stroke-linejoin="round"/><path d="M1.4 10.6Q0.4 10.6 0.4 11.600000000000001V15.399999999999999Q0.4 16.4 1.4 16.4H8.0Q9.0 16.4 9.0 15.399999999999999V11.600000000000001Q9.0 10.6 8.0 10.6H5.130000000000001L4.2700000000000005 9.4H1.4Z" fill="url(#gFold)" stroke="#b8891f" stroke-width="0.9" stroke-linejoin="round"/><path d="M2.6 19H5.8L7.6 20.8V24.8H2.6Z" fill="#f0f1ff" stroke="#6a72cc" stroke-width="0.95" stroke-linejoin="miter"/><path d="M5.8 19V20.8H7.6" fill="none" stroke="#6a72cc" stroke-width="0.7"/></g><g transform="translate(339 432.2)"><path d="M12.2 7.3A7.6 7.6 0 1 0 11.4 21.8" fill="none" stroke="url(#gBlue2)" stroke-width="3.5"/><path d="M12 0.1L19 6.8L12 13.5Z" fill="url(#gBlue2)"/><g transform="rotate(180 15.97 14.1)"><path d="M12.2 7.3A7.6 7.6 0 1 0 11.4 21.8" fill="none" stroke="url(#gBlue2)" stroke-width="3.5"/><path d="M12 0.1L19 6.8L12 13.5Z" fill="url(#gBlue2)"/></g></g><g transform="translate(393 430)"><rect x="0" y="0" width="32" height="31.6" fill="#cfe8fb"/><rect x="0" y="0" width="32" height="3.4" fill="#2a9be8"/><rect x="25" y="1" width="2" height="1.6" fill="#fff"/><rect x="28.2" y="1" width="2" height="1.6" fill="#fff"/><g transform="translate(6 6) scale(0.78)"><path d="M6.4 9V26.6H14.5M6.4 15H14.5" stroke="#3a3a3a" stroke-width="1.9" fill="none"/><path d="M0 0H4.176L5.104 1.6H11.6V9.6H0Z" fill="#e8b030"/><rect x="0" y="2.4" width="11.6" height="7.199999999999999" fill="#ffd752"/><rect x="0" y="8.6" width="11.6" height="1" fill="#efbf3e"/><path d="M14 10H18.176000000000002L19.104 11.6H25.6V19.6H14Z" fill="#e8b030"/><rect x="14" y="12.4" width="11.6" height="7.199999999999999" fill="#ffd752"/><rect x="14" y="18.6" width="11.6" height="1" fill="#efbf3e"/><path d="M14 21.6H18.176000000000002L19.104 23.200000000000003H25.6V31.200000000000003H14Z" fill="#e8b030"/><rect x="14" y="24.0" width="11.6" height="7.199999999999999" fill="#ffd752"/><rect x="14" y="30.200000000000003" width="11.6" height="1" fill="#efbf3e"/></g></g><g transform="translate(451 430)"><g transform="translate(0 0) scale(1.0)"><path d="M6.4 9V26.6H14.5M6.4 15H14.5" stroke="#3a3a3a" stroke-width="1.9" fill="none"/><path d="M0 0H4.176L5.104 1.6H11.6V9.6H0Z" fill="#e8b030"/><rect x="0" y="2.4" width="11.6" height="7.199999999999999" fill="#ffd752"/><rect x="0" y="8.6" width="11.6" height="1" fill="#efbf3e"/><path d="M14 10H18.176000000000002L19.104 11.6H25.6V19.6H14Z" fill="#e8b030"/><rect x="14" y="12.4" width="11.6" height="7.199999999999999" fill="#ffd752"/><rect x="14" y="18.6" width="11.6" height="1" fill="#efbf3e"/><path d="M14 21.6H18.176000000000002L19.104 23.200000000000003H25.6V31.200000000000003H14Z" fill="#e8b030"/><rect x="14" y="24.0" width="11.6" height="7.199999999999999" fill="#ffd752"/><rect x="14" y="30.200000000000003" width="11.6" height="1" fill="#efbf3e"/></g></g><g transform="translate(502 431.2)"><path d="M0 0H5.3999999999999995L6.6 1.6H15V12.8H0Z" fill="#e8b030"/><rect x="0" y="2.4" width="15" height="10.4" fill="#ffd752"/><rect x="0" y="11.8" width="15" height="1" fill="#efbf3e"/><path d="M18.4 0.4H25.4L29.0 4.0V13.200000000000001H18.4Z" fill="#e3eef8" stroke="#b9c8d6" stroke-width="0.9" stroke-linejoin="round"/><path d="M25.4 0.4V4.0H29.0Z" fill="#f6fafd" stroke="#b9c8d6" stroke-width="0.7" stroke-linejoin="round"/><path d="M1.8 16.4H8.8L12.4 20.0V29.4H1.8Z" fill="#e3eef8" stroke="#b9c8d6" stroke-width="0.9" stroke-linejoin="round"/><path d="M8.8 16.4V20.0H12.4Z" fill="#f6fafd" stroke="#b9c8d6" stroke-width="0.7" stroke-linejoin="round"/><path d="M18.4 16.4H25.4L29.0 20.0V29.4H18.4Z" fill="#e3eef8" stroke="#b9c8d6" stroke-width="0.9" stroke-linejoin="round"/><path d="M25.4 16.4V20.0H29.0Z" fill="#f6fafd" stroke="#b9c8d6" stroke-width="0.7" stroke-linejoin="round"/></g><g transform="translate(564 431.2)"><path d="M0 0H5.3999999999999995L6.6 1.6H15V12.8H0Z" fill="#e8b030"/><rect x="0" y="2.4" width="15" height="10.4" fill="#ffd752"/><rect x="0" y="11.8" width="15" height="1" fill="#efbf3e"/><path d="M2.6 16.4H9.2L12.799999999999999 20.0V29.4H2.6Z" fill="#e3eef8" stroke="#b9c8d6" stroke-width="0.9" stroke-linejoin="round"/><path d="M9.2 16.4V20.0H12.799999999999999Z" fill="#f6fafd" stroke="#b9c8d6" stroke-width="0.7" stroke-linejoin="round"/></g><g transform="translate(609 430)"><path d="M7.8 0L15.6 8.4H10.4V23.2H15.6L7.8 31.6L0 23.2H5.2V8.4H0Z" fill="url(#gBlueArr)"/></g><g transform="translate(663.4 430)"><path d="M7.8 0L15.6 8.4H10.4V23.2H15.6L7.8 31.6L0 23.2H5.2V8.4H0Z" fill="url(#gBlueArr)"/></g><g transform="translate(717.4 430)"><path d="M7.8 0L15.6 8.4H10.4V23.2H15.6L7.8 31.6L0 23.2H5.2V8.4H0Z" fill="url(#gBlueArr)"/></g><svg x="771" y="429" width="17" height="34" viewBox="0 0 17 34" overflow="hidden" style="overflow:hidden;position:static"><g transform="translate(0.3 1)"><path d="M7.8 0L15.6 8.4H10.4V23.2H15.6L7.8 31.6L0 23.2H5.2V8.4H0Z" fill="url(#gBlueArr)"/></g><text x="16" y="29" font-family="Liberation Sans, sans-serif" font-size="13" font-weight="bold" fill="#d01010">2</text></svg></svg>
<span class="t" style="left:612px;top:351.54px;font-size:10px;color:#a01040;font-weight:bold;font-family:'DejaVu Sans', sans-serif;transform:scaleX(1.0067);">ab</span>
<span class="t" style="left:626px;top:351.54px;font-size:10px;color:#777;font-family:'DejaVu Sans', sans-serif;transform:scaleX(1.3173);">.x</span>
<span class="t" style="left:612px;top:364.54px;font-size:10px;color:#a01040;font-weight:bold;font-family:'DejaVu Sans', sans-serif;transform:scaleX(1.0692);">cd</span>
<span class="t" style="left:626px;top:364.54px;font-size:10px;color:#777;font-family:'DejaVu Sans', sans-serif;transform:scaleX(1.3173);">.y</span>
<span class="t" style="left:666px;top:351.54px;font-size:10px;color:#777;font-family:'DejaVu Sans', sans-serif;transform:scaleX(1.3173);">x.</span>
<span class="t" style="left:678px;top:351.54px;font-size:10px;color:#1a2a8a;font-weight:bold;font-family:'DejaVu Sans', sans-serif;transform:scaleX(1.0355);">ab</span>
<span class="t" style="left:666px;top:364.54px;font-size:10px;color:#777;font-family:'DejaVu Sans', sans-serif;transform:scaleX(1.5642);">y.</span>
<span class="t" style="left:678px;top:364.54px;font-size:10px;color:#1a2a8a;font-weight:bold;font-family:'DejaVu Sans', sans-serif;transform:scaleX(1.0998);">cd</span>
<span class="t" style="left:722px;top:349.84px;font-size:12px;color:#a8307a;font-family:'DejaVu Sans', sans-serif;transform:scaleX(1.0765);">'05</span>
<span class="t" style="left:722px;top:362.84px;font-size:12px;color:#a8307a;font-family:'DejaVu Sans', sans-serif;transform:scaleX(1.0765);">'06</span>
<div class="a" style="left:770px;top:345px;width:18px;height:36px;overflow:hidden">
<span class="t" style="left:5px;top:4.84px;font-size:12px;color:#3a8a10;font-family:'DejaVu Sans', sans-serif;transform:scaleX(0.7640);">250</span>
<span class="t" style="left:5px;top:17.84px;font-size:12px;color:#3a8a10;font-family:'DejaVu Sans', sans-serif;transform:scaleX(0.7640);">500</span>
</div>
<span class="t" style="left:627.4px;top:432.80px;font-size:13px;color:#d01010;font-weight:bold;transform:scaleX(0.9231);">A.</span>
<span class="t" style="left:627.4px;top:447.00px;font-size:13px;color:#d01010;font-weight:bold;transform:scaleX(1.0378);">Z.</span>
<span class="t" style="left:681.4px;top:432.80px;font-size:13px;color:#d01010;font-weight:bold;transform:scaleX(0.8769);">.A</span>
<span class="t" style="left:681.4px;top:447.00px;font-size:13px;color:#d01010;font-weight:bold;transform:scaleX(0.9859);">.Z</span>
<span class="t" style="left:732px;top:432.80px;font-size:13px;color:#d01010;font-weight:bold;transform:scaleX(0.9907);">'15</span>
<span class="t" style="left:732px;top:447.00px;font-size:13px;color:#d01010;font-weight:bold;transform:scaleX(0.9907);">'16</span>
</body></html>
